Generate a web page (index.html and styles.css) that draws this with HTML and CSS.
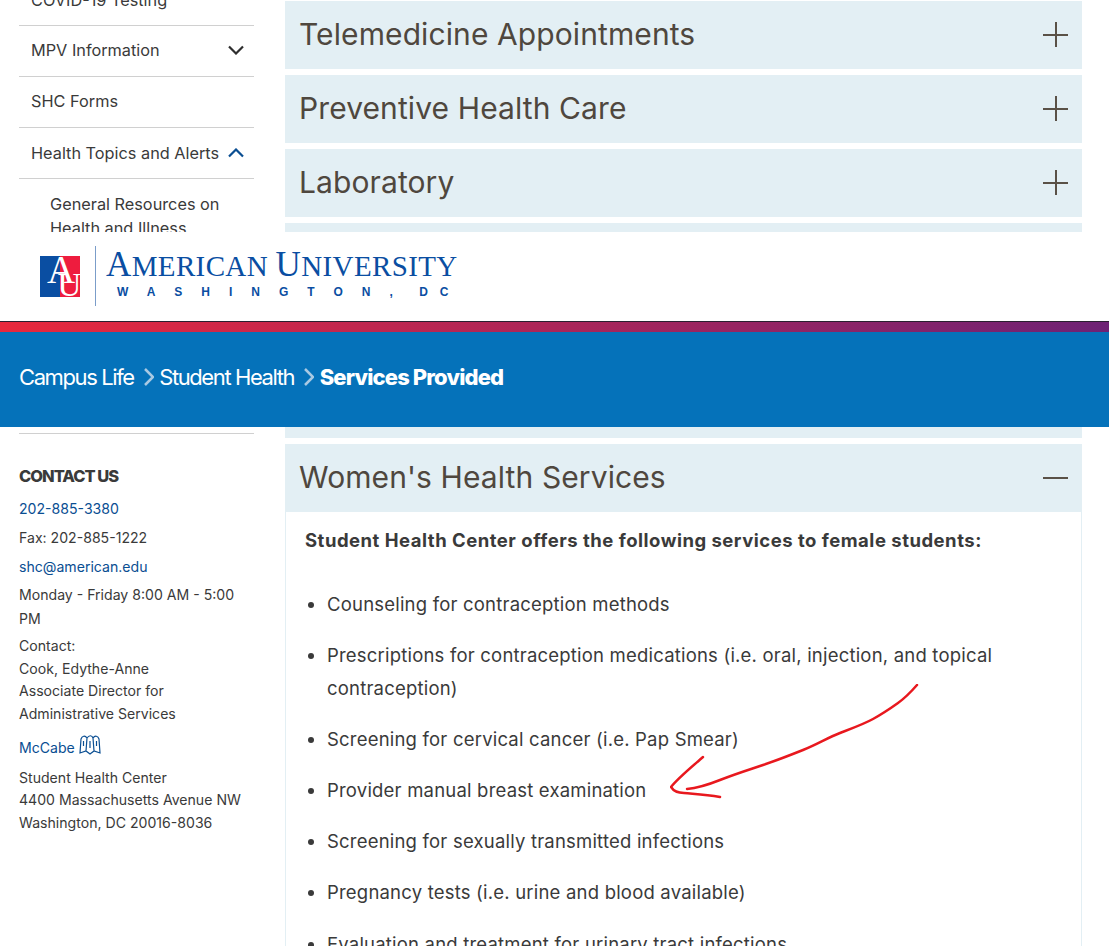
FILE: index.html
```html
<!DOCTYPE html>
<html lang="en">
<head>
  <meta charset="UTF-8" />
  <title>Services Provided - Student Health</title>
  <link rel="stylesheet" href="styles.css">
</head>
<body>
  <section class="scrolled-top">
    <nav class="side-nav">
      <a class="nav-item">COVID-19 Testing</a>
      <a class="nav-item nav-raised">MPV Information
        <svg class="chevron" viewBox="0 0 16 10"><path d="M1 1.5 8 8.5 15 1.5"/></svg>
      </a>
      <a class="nav-item nav-raised">SHC Forms</a>
      <a class="nav-item">Health Topics and Alerts
        <svg class="chevron chevron-open" viewBox="0 0 16 10"><path d="M1 8.5 8 1.5 15 8.5"/></svg>
      </a>
      <a class="nav-sub">General Resources on Health and Illness</a>
    </nav>
    <div class="accordion">
      <div class="acc-head"><h2>Telemedicine Appointments</h2><span class="plus"></span></div>
      <div class="acc-head"><h2>Preventive Health Care</h2><span class="plus"></span></div>
      <div class="acc-head"><h2>Laboratory</h2><span class="plus"></span></div>
      <div class="acc-head"></div>
    </div>
  </section>

  <header class="site-header">
    <div class="logo">
      <svg class="logo-mark" viewBox="0 0 40 41">
        <rect width="20" height="41" fill="#0a4ea2"/>
        <rect x="20" width="20" height="41" fill="#ee1c3e"/>
        <text x="21" y="27" class="mark-a">A</text>
        <text x="29.5" y="40" class="mark-u">U</text>
      </svg>
      <div class="logo-text">
        <div class="logo-name"><span class="logo-cap">A</span>merican <span class="logo-cap">U</span>niversity</div>
        <div class="logo-place">WASHINGTON, <span class="logo-dc">DC</span></div>
      </div>
    </div>
  </header>

  <div class="gradient-bar"></div>
  <div class="crumbs">
    <a>Campus Life</a>
    <svg class="crumb-sep" viewBox="0 0 10 18"><path d="M1 1 9 9 1 17"/></svg>
    <a>Student Health</a>
    <svg class="crumb-sep" viewBox="0 0 10 18"><path d="M1 1 9 9 1 17"/></svg>
    <strong>Services Provided</strong>
  </div>

  <section class="content">
    <aside class="contact">
      <h3>CONTACT US</h3>
      <p><a>202-885-3380</a></p>
      <p>Fax: 202-885-1222</p>
      <p class="before-hours"><a>shc@american.edu</a></p>
      <p class="hours">Monday - Friday 8:00 AM - 5:00 PM</p>
      <p>Contact:<br>Cook, Edythe-Anne<br>Associate Director for<br>Administrative Services</p>
      <p class="map-line"><a>McCabe</a>
        <svg class="map-icon" viewBox="0 0 22 20"><path d="M1 18 2 4C3 1 6 0 8 3 10 0 13 0 14 3 16 0 19 1 20 4L21 18 15 16 11 19 7 16ZM8 3 7 16M14 3 15 16M11 6V13M4.500 6V11M17.500 6V11"/></svg>
      </p>
      <p>Student Health Center<br>4400 Massachusetts Avenue NW<br>Washington, DC 20016-8036</p>
    </aside>
    <div class="accordion">
      <div class="acc-head acc-sliver"></div>
      <div class="acc-head"><h2>Women's Health Services</h2><span class="minus"></span></div>
      <div class="acc-panel">
        <p class="panel-lead">Student Health Center offers the following services to female students:</p>
        <ul>
          <li>Counseling for contraception methods</li>
          <li>Prescriptions for contraception medications (i.e. oral, injection, and topical contraception)</li>
          <li>Screening for cervical cancer (i.e. Pap Smear)</li>
          <li>Provider manual breast examination</li>
          <li>Screening for sexually transmitted infections</li>
          <li>Pregnancy tests (i.e. urine and blood available)</li>
          <li>Evaluation and treatment for urinary tract infections</li>
        </ul>
      </div>
    </div>
    <svg class="scribble" viewBox="0 0 260 130">
      <path d="M247 1C240 9 235 14 228 19S212 30 203 35 183 44 170 49 148 60 133 66 108 76 93 81 65 90 50 96 28 104 17 105"/>
      <path d="M33 73C24 81 8 94 1 103 4 108 8 109 14 109 25 110 35 110 50 113"/>
    </svg>
  </section>
</body>
</html>
```

FILE: styles.css
```css
html, body {
  height: 946px;
  overflow: hidden;
}

body {
  margin: 0;
  background-color: #fff;
  color: #3a3a3a;
  font-family: Inter, "Noto Sans", sans-serif;
}

h2, h3, p, ul {
  margin: 0;
}

a {
  color: inherit;
}

/* part of the page scrolled under the sticky header */
.scrolled-top {
  height: 232px;
  overflow: hidden;
  display: flex;
  gap: 31px;
  padding: 0 27px 0 19px;
}

.side-nav {
  width: 235px;
  flex: none;
  margin-top: -25px;
}

.nav-item {
  display: flex;
  justify-content: space-between;
  align-items: center;
  box-sizing: border-box;
  height: 51px;
  padding: 0 10px 0 12px;
  border-bottom: 1px solid #d0d0d0;
  font-size: 16.3px;
  white-space: nowrap;
}

.nav-raised {
  padding-bottom: 2px;
}

.nav-sub {
  display: block;
  padding: 13px 30px 0 31px;
  font-size: 16.3px;
  line-height: 24px;
}

.chevron {
  width: 16px;
  height: 10px;
  fill: none;
  stroke: #2e2e2e;
  stroke-width: 2.2;
}

.chevron-open {
  stroke: #0a4e92;
}

.accordion {
  flex: 1;
  padding-top: 1px;
}

.acc-head {
  display: flex;
  justify-content: space-between;
  align-items: center;
  box-sizing: border-box;
  height: 67.5px;
  margin-bottom: 6.5px;
  padding: 0 14px;
  background-color: #e3eff4;
  color: #4f473e;
}

.acc-head h2 {
  margin-bottom: 2px;
  font-size: 30px;
  font-weight: 400;
  letter-spacing: 0.1px;
}

.plus, .minus {
  position: relative;
  width: 25px;
  height: 25px;
}

.plus::before, .minus::before {
  content: "";
  position: absolute;
  left: 0;
  right: 0;
  top: 11.500px;
  height: 2px;
  background-color: #5a5147;
}

.plus::after {
  content: "";
  position: absolute;
  top: 0;
  bottom: 0;
  left: 11.500px;
  width: 2px;
  background-color: #5a5147;
}

.site-header {
  height: 89px;
  background-color: #fff;
  box-sizing: border-box;
  padding: 14px 0 0 40px;
}

.logo {
  display: flex;
  align-items: center;
}

.logo-mark {
  width: 40px;
  height: 41px;
  flex: none;
}

.mark-a {
  font: 39px "Liberation Serif", serif;
  fill: #fff;
  text-anchor: middle;
}

.mark-u {
  font: 33px "Liberation Serif", serif;
  fill: #fff;
  text-anchor: middle;
}

.logo-text {
  margin-left: 15px;
  padding-left: 10px;
  border-left: 1px solid #7b9dc9;
  height: 60px;
}

.logo-name {
  margin-top: 1px;
  color: #0a4ea2;
  font-family: "Liberation Serif", serif;
  text-transform: uppercase;
  font-size: 29px;
  letter-spacing: 0.37px;
  line-height: 36px;
  white-space: nowrap;
}

.logo-cap {
  font-size: 35px;
}

.logo-place {
  margin: 1px 0 0 11px;
  color: #0a4ea2;
  font-family: "Liberation Sans", sans-serif;
  font-size: 12px;
  font-weight: 700;
  letter-spacing: 19px;
  word-spacing: -15px;
  white-space: nowrap;
}

.logo-dc {
  letter-spacing: 12px;
}

.gradient-bar {
  height: 10px;
  border-top: 1px solid #2a2030;
  background: linear-gradient(90deg, #e8283d, #6e2275);
}

.crumbs {
  box-sizing: border-box;
  height: 95px;
  display: flex;
  align-items: center;
  padding: 0 0 6px 19px;
  background-color: #0572ba;
  color: #fff;
  font-size: 22px;
  letter-spacing: -1.4px;
}

.crumbs strong {
  font-weight: 800;
  letter-spacing: -0.85px;
}

.crumb-sep {
  width: 10px;
  height: 18px;
  margin: 0 5.500px 0 10px;
  fill: none;
  stroke: #a9c9e3;
  stroke-width: 2.500;
}

.content {
  position: relative;
  display: flex;
  gap: 31px;
  padding: 0 27px 0 19px;
}

.contact {
  width: 235px;
  flex: none;
  margin-top: 6px;
  border-top: 1px solid #d0d0d0;
  padding-top: 31px;
  font-size: 14.1px;
  line-height: 22.5px;
}

.contact h3 {
  margin-bottom: 10px;
  font-size: 16.5px;
  font-weight: 800;
  letter-spacing: -1px;
}

.contact p {
  margin-bottom: 6.5px;
}

.contact .before-hours {
  margin-bottom: 5px;
}

.contact .hours {
  margin-bottom: 4px;
  line-height: 24px;
}

.contact a {
  color: #0a4e92;
}

.contact .map-line {
  display: flex;
  align-items: flex-end;
  gap: 4px;
  margin-top: 10px;
  margin-bottom: 7.5px;
}

.map-icon {
  width: 22px;
  height: 20px;
  margin-bottom: 4px;
  fill: none;
  stroke: #0a4e92;
  stroke-width: 1.2;
}

.content .accordion {
  padding-top: 0;
}

.acc-sliver {
  height: 11px;
  margin-bottom: 6px;
}

.acc-panel {
  margin-top: -6.500px;
  padding: 12px 19px 0;
  border-left: 1px solid #e3eff4;
  border-right: 1px solid #e3eff4;
  font-size: 18.5px;
  letter-spacing: 0.2px;
  line-height: 33px;
}

.panel-lead {
  font-weight: 700;
  letter-spacing: 0.5px;
  margin-bottom: 31px;
}

.acc-panel ul {
  padding-left: 22px;
}

.acc-panel li {
  margin-bottom: 18.2px;
}

.scribble {
  position: absolute;
  left: 670px;
  top: 257px;
  width: 260px;
  height: 130px;
  fill: none;
  stroke: #e8181e;
  stroke-width: 2.500;
  stroke-linecap: round;
}
```
